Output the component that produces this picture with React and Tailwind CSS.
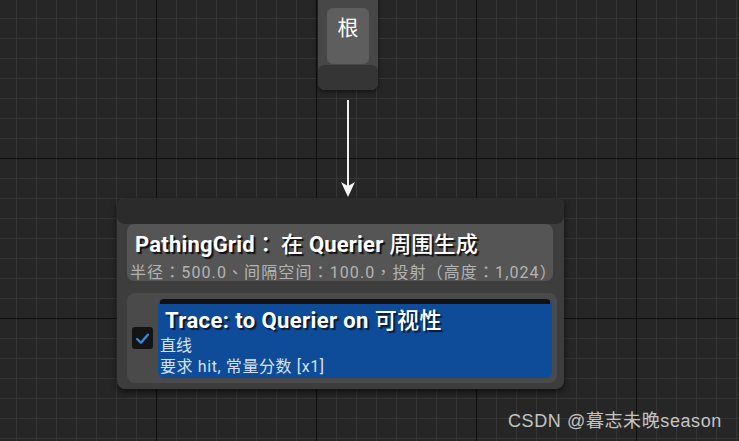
const punct = "[font-family:'Noto_Sans_CJK_TC',sans-serif]";

export default function App() {
  const font = { fontFamily: 'Roboto, "Noto Sans CJK SC", sans-serif' };

  return (
    <div
      style={font}
      className="relative w-[739px] h-[441px] overflow-hidden bg-[#262626] bg-[linear-gradient(to_right,#0f0f0f_1px,transparent_1px),linear-gradient(to_bottom,#0f0f0f_1px,transparent_1px),linear-gradient(to_right,#353535_1px,transparent_1px),linear-gradient(to_bottom,#353535_1px,transparent_1px)] bg-[size:160px_160px,160px_160px,20px_20px,20px_20px] bg-[position:156px_158px]"
    >
      {/* Root node */}
      <div className="absolute left-[318px] top-[-6px] w-[60px] h-[96px] rounded-[7px] bg-[#474747] shadow-[0_2px_4px_rgba(0,0,0,0.5)] overflow-hidden flex flex-col">
        <div className="flex-1 pt-[14px] px-[9px]">
          <div className="h-[56px] rounded-[6px] bg-[#5e5e5e] flex justify-center pt-[7px]">
            <span className="text-[21px] leading-[26px] text-white">根</span>
          </div>
        </div>
        <div className="h-[25px] bg-[#353535] rounded-t-[6px]"></div>
      </div>

      {/* Arrow */}
      <svg className="absolute left-[338px] top-[100px]" width="20" height="100" viewBox="0 0 20 100">
        <line x1="10" y1="0" x2="10" y2="86" stroke="#f0f0f0" strokeWidth="2" />
        <path d="M3 82 L10 97 L17 82 L10 86 Z" fill="#f5f5f5" />
      </svg>

      {/* Main node */}
      <div className="absolute left-[117px] top-[198px] w-[447px] h-[191px] rounded-[8px] bg-[#3d3d3d] shadow-[0_3px_6px_rgba(0,0,0,0.6)] flex flex-col overflow-hidden">
        <div className="h-[26px] bg-[#2b2b2b] rounded-b-[8px]"></div>
        <div className="flex flex-col gap-[12px] pl-[10px] pr-[11px]">
          <div className="h-[57px] rounded-[7px] bg-[#555555] pl-[3px] pt-[4px]">
            <div className="pl-[5px] text-[22px] leading-[28px] tracking-[0.2px] font-bold text-white whitespace-nowrap [text-shadow:2px_2px_1px_#111]">
              PathingGrid<span className={`font-medium mr-[4px] ${punct}`}>：</span>
              <span className="font-medium">在 </span>Querier<span className="font-medium"> 周围生成</span>
            </div>
            <div className="mt-[2px] text-[16px] leading-[20px] tracking-[1.1px] text-[#b4b4b4] whitespace-nowrap">
              半径<span className={punct}>：</span>500.0<span className={punct}>、</span>间隔空间<span className={punct}>：</span>100.0<span className={punct}>，</span>投射<span className={punct}>（</span>高度<span className={punct}>：</span>1,024<span className={punct}>）</span>
            </div>
          </div>
          <div className="h-[90px] rounded-[8px] bg-[#4a4a4a] flex items-center pr-[5px] -mr-[4px]">
            <div className="w-[31px] flex justify-center">
              <div className="w-[21px] h-[22px] rounded-[3px] bg-[#141414] flex items-center justify-center">
                <svg width="15" height="15" viewBox="0 0 14 14">
                  <path d="M2 7.5 L5.5 11 L12 3.5" fill="none" stroke="#2a8cf0" strokeWidth="2.2" strokeLinecap="round" strokeLinejoin="round" />
                </svg>
              </div>
            </div>
            <div className="flex-1 h-[79px] rounded-[6px] bg-[#0e4b98] overflow-hidden flex flex-col">
              <div className="h-[5px] mx-[2px] bg-[#111111]"></div>
              <div className="pl-[7px] pt-[4px] text-[22px] leading-[26px] tracking-[0.4px] font-bold text-white whitespace-nowrap [text-shadow:2px_2px_1px_#0a1a33]">
                Trace: to Querier on<span className="font-medium"> 可视性</span>
              </div>
              <div className="mt-[1px] pl-[2px] text-[16px] leading-[21px] text-[#d6e2f0]">直线</div>
              <div className="pl-[2px] text-[16px] leading-[21px] tracking-[0.6px] text-[#d6e2f0] whitespace-nowrap">要求 hit, 常量分数 [x1]</div>
            </div>
          </div>
        </div>
      </div>

      {/* Watermark */}
      <div className="absolute left-[508px] top-[409px] text-[18px] leading-[24px] tracking-[0.6px] text-[#c4c4c4] [font-family:'Liberation_Sans','Noto_Sans_CJK_SC',sans-serif]">
        CSDN @暮志未晚season
      </div>
    </div>
  );
}
